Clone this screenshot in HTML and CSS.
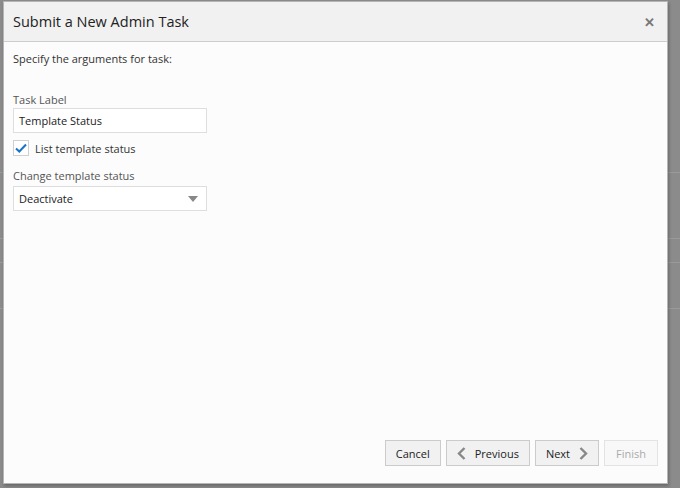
FILE: index.html
```html
<!DOCTYPE html>
<html lang="en">
<head>
    <meta charset="UTF-8">
    <title>Submit a New Admin Task</title>
    <link rel="stylesheet" href="styles.css">
</head>
<body>
    <div class="overlay">
        <div class="dialog">
            <div class="dialog-header">
                <h2>Submit a New Admin Task</h2>
                <span class="close">&#x2715;</span>
            </div>

            <div class="dialog-body">
                <p class="intro">Specify the arguments for task:</p>

                <label class="field-label">Task Label</label>
                <div class="text-input">Template Status</div>

                <div class="check-row">
                    <span class="checkbox">
                        <svg width="12" height="10" viewBox="0 0 12 10"><path d="M1 5.5 L4.3 8.5 L11 1.5" fill="none" stroke="#1a73c8" stroke-width="2"/></svg>
                    </span>
                    <span>List template status</span>
                </div>

                <label class="field-label">Change template status</label>
                <div class="select">
                    <span>Deactivate</span>
                    <span class="caret"></span>
                </div>
            </div>

            <div class="dialog-footer">
                <button class="btn">Cancel</button>
                <button class="btn">
                    <svg width="9" height="13" viewBox="0 0 9 13"><path d="M7.5 1 L2 6.5 L7.5 12" fill="none" stroke="#888" stroke-width="2.4"/></svg>
                    Previous
                </button>
                <button class="btn">
                    Next
                    <svg width="9" height="13" viewBox="0 0 9 13"><path d="M1.5 1 L7 6.5 L1.5 12" fill="none" stroke="#888" stroke-width="2.4"/></svg>
                </button>
                <button class="btn disabled">Finish</button>
            </div>
        </div>
    </div>
</body>
</html>
```

FILE: styles.css
```css
body { margin: 0; font-family: "Open Sans", "Noto Sans", sans-serif; font-size: 11px; color: #333; }

/* dimmed page behind the dialog, with faint table rules showing through */
.overlay {
    width: 680px; height: 488px; padding: 1px 0 0 3px; box-sizing: border-box;
    background:
        linear-gradient(#9a9a9a, #9a9a9a) 0 172px / 100% 1px no-repeat,
        linear-gradient(#9a9a9a, #9a9a9a) 0 238px / 100% 1px no-repeat,
        linear-gradient(#9a9a9a, #9a9a9a) 0 262px / 100% 1px no-repeat,
        linear-gradient(#9a9a9a, #9a9a9a) 0 308px / 100% 1px no-repeat,
        #8b8b8b;
}

.dialog { width: 665px; height: 483px; background: #fcfcfc; border: 1px solid #b5b5b5; box-sizing: border-box; display: flex; flex-direction: column; box-shadow: 1px 2px 3px rgba(0,0,0,0.25); }
.dialog-header { height: 39px; background: #f1f1f1; border-bottom: 1px solid #cdcdcd; display: flex; align-items: center; justify-content: space-between; padding: 0 12px 0 9px; flex-shrink: 0; }
.dialog-header h2 { margin: 0; font-size: 14.5px; font-weight: normal; color: #222; }
.close { color: #777; font-size: 13px; font-weight: bold; }
.dialog-body { flex: 1; padding: 9px 9px 0; }
.intro { margin: 0 0 26px; }
.field-label { display: block; color: #555; margin-bottom: 1px; }
.text-input, .select { width: 194px; height: 25px; border: 1px solid #dedede; background: #fff; box-sizing: border-box; padding: 0 5px; display: flex; align-items: center; color: #222; }
.check-row { display: flex; align-items: center; gap: 6px; margin: 7px 0 12px; }
.checkbox { width: 14px; height: 14px; border: 1px solid #d0d0d0; background: #fff; display: flex; align-items: center; justify-content: center; }
.select { justify-content: space-between; padding-right: 8px; margin-top: 3px; }
.caret { width: 0; height: 0; border-left: 5px solid transparent; border-right: 5px solid transparent; border-top: 6px solid #888; }
.dialog-footer { display: flex; justify-content: flex-end; gap: 5px; padding: 0 9px 17px; }
.btn { height: 26px; padding: 0 10px; background: #f1f1f1; border: 1px solid #cbcbcb; font-family: inherit; font-size: 11px; color: #222; display: flex; align-items: center; gap: 9px; }
.btn.disabled { padding: 0 11px; color: #aaa; background: #f8f8f8; border-color: #e3e3e3; }
```
